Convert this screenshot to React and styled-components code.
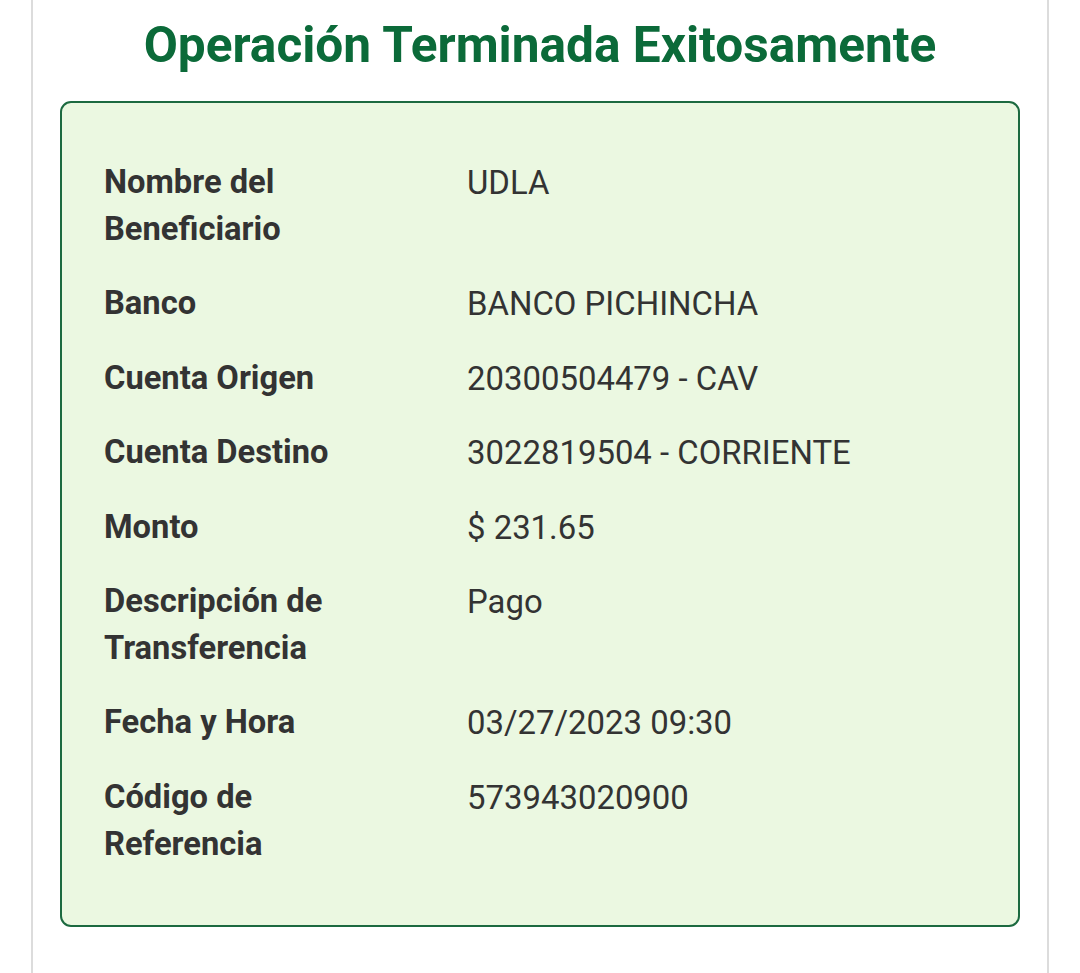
import styled, { createGlobalStyle } from 'styled-components'

const GlobalStyle = createGlobalStyle`
  html, body {
    margin: 0;
    padding: 0;
    background: #ffffff;
  }
  body {
    font-family: Roboto, "Noto Sans", "Liberation Sans", sans-serif;
  }
`

const Page = styled.div`
  width: 1080px;
  height: 973px;
  background: #ffffff;
  padding: 0 31px;
  box-sizing: border-box;
  overflow: hidden;
`

const Panel = styled.div`
  height: 100%;
  border-left: 2px solid #dcdcdc;
  border-right: 2px solid #dcdcdc;
  padding: 0 27px;
  box-sizing: border-box;
`

const Title = styled.h1`
  margin: 0;
  padding: 17px 0 28px;
  text-align: center;
  color: #0b6a39;
  font-size: 49.6px;
  font-weight: 700;
  line-height: 56px;
  white-space: nowrap;
`

const Card = styled.div`
  background: #ebf8e1;
  border: 2px solid #1c6a40;
  border-radius: 11px;
  padding: 56px 42px 57px;
`

const Details = styled.dl`
  margin: 0;
  display: grid;
  grid-template-columns: 363px 1fr;
  row-gap: 27.4px;
`

const Label = styled.dt`
  margin: 0;
  color: #333333;
  font-size: 32.7px;
  font-weight: 700;
  line-height: 47px;
  max-width: 270px;
`

const Value = styled.dd`
  margin: 0;
  color: #333333;
  font-size: 32.9px;
  font-weight: 400;
  line-height: 47px;
`

const rows = [
  ['Nombre del Beneficiario', 'UDLA'],
  ['Banco', 'BANCO PICHINCHA'],
  ['Cuenta Origen', '20300504479 - CAV'],
  ['Cuenta Destino', '3022819504 - CORRIENTE'],
  ['Monto', '$ 231.65'],
  ['Descripción de Transferencia', 'Pago'],
  ['Fecha y Hora', '03/27/2023 09:30'],
  ['Código de Referencia', '573943020900'],
]

export default function App() {
  return (
    <>
      <GlobalStyle />
      <Page>
        <Panel>
          <Title>Operación Terminada Exitosamente</Title>
          <Card>
            <Details>
              {rows.map(([label, value]) => [
                <Label key={label}>{label}</Label>,
                <Value key={label + '-v'}>{value}</Value>,
              ])}
            </Details>
          </Card>
        </Panel>
      </Page>
    </>
  )
}
